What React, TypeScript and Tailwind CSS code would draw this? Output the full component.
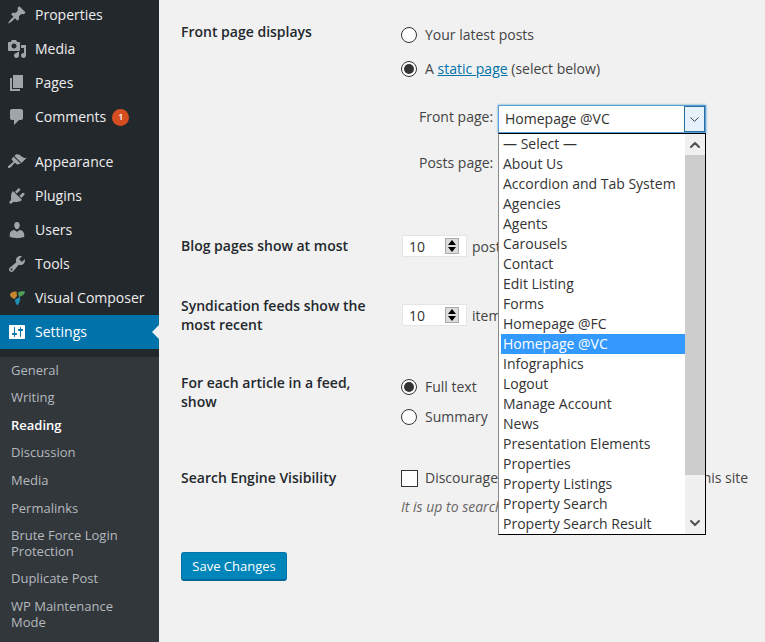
import { ChevronDown, ChevronUp } from "lucide-react";

const font = "font-['Open_Sans',sans-serif]";

const icons: Record<string, string> = {
  pin: "M10.44 3.02l1.82-1.82 6.36 6.35-1.83 1.82c-1.05-.68-2.48-.57-3.41.36l-.75.75c-.92.93-1.04 2.35-.35 3.41l-1.83 1.82-2.41-2.41-2.8 2.79c-.42.42-3.38 2.71-3.8 2.29s1.86-3.39 2.28-3.81l2.79-2.79L4.1 9.36l1.83-1.82c1.05.69 2.48.57 3.4-.36l.75-.75c.93-.92 1.05-2.35.36-3.41z",
  media: "M13 11V4c0-.55-.45-1-1-1h-1.67L9 1H5L3.67 3H2c-.55 0-1 .45-1 1v7c0 .55.45 1 1 1h10c.55 0 1-.45 1-1zM7 4.5c1.38 0 2.5 1.12 2.5 2.5S8.38 9.5 7 9.5 4.5 8.38 4.5 7 5.62 4.5 7 4.5zM14 6h5v10.5c0 1.38-1.12 2.5-2.5 2.5S14 17.88 14 16.5s1.12-2.5 2.5-2.5c.17 0 .34.02.5.05V9h-3V6zm-4 8.05V13h2v3.5c0 1.38-1.12 2.5-2.5 2.5S7 17.88 7 16.5 8.12 14 9.5 14c.17 0 .34.02.5.05z",
  pages: "M6 15V2h10v13H6zm-1 1h8v2H3V5h2v11z",
  comments: "M5 2h9c1.1 0 2 .9 2 2v7c0 1.1-.9 2-2 2h-2l-5 5v-5H5c-1.1 0-2-.9-2-2V4c0-1.1.9-2 2-2z",
  appearance: "M14.48 11.06L7.41 3.99l1.5-1.5c.5-.56 2.3-.47 3.51.32 1.21.8 1.43 1.28 2.91 2.1 1.18.64 2.45 1.26 4.45.85zm-.71.71L6.7 4.7 4.93 6.47c-.39.39-.39 1.02 0 1.41l1.06 1.06c.39.39.39 1.03 0 1.42-.6.6-1.43 1.11-2.21 1.69-.35.26-.7.53-1.01.84C1.43 13.23.4 14.9 1.2 15.7c.8.8 2.2-.18 3.55-1.53.29-.29.55-.6.8-.91.55-.72 1.09-1.48 1.69-2.08.39-.39 1.03-.39 1.42 0l1.06 1.06c.39.39 1.02.39 1.41 0z",
  plugins: "M13.11 4.36L9.87 7.6 8 5.73l3.24-3.24c.35-.34 1.05-.2 1.56.32.52.51.66 1.21.31 1.55zm-8 1.77l.91-1.12 9.01 9.01-1.19.84c-.71.71-2.63 1.16-3.82 1.16H6.14L4.9 17.26c-.59.59-1.54.59-2.12 0-.59-.58-.59-1.53 0-2.12l1.24-1.24v-3.88c0-1.13.4-3.19 1.09-3.89zm7.26 3.97l3.24-3.24c.34-.35 1.04-.21 1.55.31.52.51.66 1.21.31 1.55l-3.24 3.25z",
  users: "M10 9.25c-2.27 0-2.73-3.44-2.73-3.44C7 4.02 7.82 2 9.97 2c2.16 0 2.98 2.02 2.71 3.81 0 0-.41 3.44-2.68 3.44zm0 2.57L12.72 10c2.39 0 4.52 2.33 4.52 4.53v2.49s-3.65 1.13-7.24 1.13c-3.65 0-7.24-1.13-7.24-1.13v-2.49c0-2.25 1.94-4.48 4.47-4.48z",
  tools: "M16.68 9.77c-1.34 1.34-3.3 1.67-4.95.99l-5.41 6.52c-.99.99-2.59.99-3.58 0s-.99-2.59 0-3.57l6.52-5.42c-.68-1.65-.35-3.61.99-4.95 1.28-1.28 3.12-1.62 4.72-1.06l-2.89 2.89 2.82 2.82 2.86-2.87c.53 1.58.18 3.39-1.08 4.65zM3.81 16.21c.4.39 1.04.39 1.43 0 .4-.4.4-1.04 0-1.43-.39-.4-1.03-.4-1.43 0-.39.39-.39 1.03 0 1.43z",
  settings: "M18 16V4c0-.55-.45-1-1-1H3c-.55 0-1 .45-1 1v12c0 .55.45 1 1 1h14c.55 0 1-.45 1-1zM8 11h1c.55 0 1 .45 1 1s-.45 1-1 1H8v1.5c0 .28-.22.5-.5.5s-.5-.22-.5-.5V13H6c-.55 0-1-.45-1-1s.45-1 1-1h1V5.5c0-.28.22-.5.5-.5s.5.22.5.5V11zm5-2h-1c-.55 0-1-.45-1-1s.45-1 1-1h1V5.5c0-.28.22-.5.5-.5s.5.22.5.5V7h1c.55 0 1 .45 1 1s-.45 1-1 1h-1v5.5c0 .28-.22.5-.5.5s-.5-.22-.5-.5V9z",
};

function Dashicon({ name, className }: { name: string; className: string }) {
  return (
    <svg viewBox="0 0 20 20" className={className} fill="currentColor">
      <path d={icons[name]} />
    </svg>
  );
}

function VcLogo() {
  return (
    <svg viewBox="0 0 20 20" className="w-5 h-5">
      <path d="M3 6.5C3 4.5 7 3 9.5 3.5L10 8l-2.5 3C5 10.500 3 8.500 3 6.500z" fill="#c4872f" />
      <path d="M11 4.500C13 3 16 3 18 3.500c0 2-2 4.500-6 5.500z" fill="#4f9e5a" />
      <path d="M8 11.500L13 9c.500 2.500-.500 6-2.500 8.500C9 16 8 14 8 11.500z" fill="#1f8fb8" />
    </svg>
  );
}

function MenuItem({ icon, label, badge }: { icon: string; label: string; badge?: boolean }) {
  return (
    <div className="h-[34px] flex items-center pl-[7px] text-[14px] text-[#eeeeee]">
      {icon === "vc" ? <VcLogo /> : <Dashicon name={icon} className="w-5 h-5 text-[#a0a5aa]" />}
      <span className="ml-2 mb-[2px]">{label}</span>
      {badge && (
        <span className="ml-[6px] w-[17px] h-[17px] rounded-full bg-[#d54e21] text-white text-[9px] font-semibold flex items-center justify-center">
          1
        </span>
      )}
    </div>
  );
}

function Sidebar() {
  const sub: [string, string][] = [
    ["General", "h-[27px] mt-[8px]"],
    ["Writing", "h-[28px]"],
    ["Reading", "h-[27px]"],
    ["Discussion", "h-[28px]"],
    ["Media", "h-[28px]"],
    ["Permalinks", "h-[28px]"],
  ];
  return (
    <aside className="w-[159px] shrink-0 h-[642px] bg-[#23282d] overflow-hidden">
      <div className="-mt-[2px]">
        <MenuItem icon="pin" label="Properties" />
        <MenuItem icon="media" label="Media" />
        <MenuItem icon="pages" label="Pages" />
        <MenuItem icon="comments" label="Comments" badge />
        <div className="h-[11px]" />
        <MenuItem icon="appearance" label="Appearance" />
        <MenuItem icon="plugins" label="Plugins" />
        <MenuItem icon="users" label="Users" />
        <MenuItem icon="tools" label="Tools" />
        <MenuItem icon="vc" label="Visual Composer" />
        <div className="relative h-[34px] flex items-center pl-[7px] bg-[#0073aa] text-[14px] text-white">
          <Dashicon name="settings" className="w-5 h-5 text-white" />
          <span className="ml-2 mb-[2px]">Settings</span>
          <div className="absolute right-0 top-[10px] w-0 h-0 border-y-[7px] border-y-transparent border-r-[7px] border-r-[#f1f1f1]" />
        </div>
      </div>
      <div className="bg-[#32373c] h-[300px] pl-[11px] text-[13px] text-[#b4b9be]">
        {sub.map(([label, cls]) => (
          <div key={label} className={`flex items-center ${cls} ${label === "Reading" ? "text-white font-semibold" : ""}`}>
            {label}
          </div>
        ))}
        <div className="leading-[16px] pt-[4px] pb-[6px]">
          Brute Force Login
          <br />
          Protection
        </div>
        <div className="h-[27px] flex items-center">Duplicate Post</div>
        <div className="leading-[16px] pt-[6px]">
          WP Maintenance
          <br />
          Mode
        </div>
      </div>
    </aside>
  );
}

function Radio({ checked }: { checked?: boolean }) {
  return (
    <span className="w-[16px] h-[16px] mt-[2px] mr-[8px] rounded-full bg-white border border-[#333333] flex items-center justify-center shrink-0">
      {checked && <span className="w-[10px] h-[10px] rounded-full bg-[#333333]" />}
    </span>
  );
}

function NumberField({ suffix }: { suffix: string }) {
  return (
    <div className="flex items-center ml-px">
      <div className="w-[65px] h-[22px] bg-white border border-[#e5e5e5] flex items-center pl-[6px] text-[14px] text-[#333333]">
        <span className="w-[36px]">10</span>
        <span className="w-[14px] h-[16px] bg-[#dddddd] border border-[#aaaaaa] flex flex-col items-center justify-center gap-[2px]">
          <span className="w-0 h-0 border-x-[4px] border-x-transparent border-b-[5px] border-b-black" />
          <span className="w-0 h-0 border-x-[4px] border-x-transparent border-t-[5px] border-t-black" />
        </span>
      </div>
      <span className="ml-[5px] whitespace-nowrap">{suffix}</span>
    </div>
  );
}

const pages = [
  "— Select —",
  "About Us",
  "Accordion and Tab System",
  "Agencies",
  "Agents",
  "Carousels",
  "Contact",
  "Edit Listing",
  "Forms",
  "Homepage @FC",
  "Homepage @VC",
  "Infographics",
  "Logout",
  "Manage Account",
  "News",
  "Presentation Elements",
  "Properties",
  "Property Listings",
  "Property Search",
  "Property Search Result",
];

function PageSelect() {
  return (
    <div className="relative w-[208px] h-[28px]">
      <div className="flex h-full bg-white border border-[#5b9dd9] shadow-[0_0_2px_rgba(30,140,190,0.8)] text-[14px] text-[#333333]">
        <div className="flex-1 flex items-center pl-[6px] pb-[2px]">Homepage @VC</div>
        <div className="w-[21px] bg-[#e5f1fb] border border-[#2a6f9f] flex items-center justify-center">
          <ChevronDown size={15} strokeWidth={1.5} className="text-[#333333]" />
        </div>
      </div>
      <div className="absolute left-0 top-[28px] w-[208px] h-[402px] z-10 bg-white border border-black border-l-[#8a8a8a] flex overflow-hidden text-[14px] text-[#333333]">
        <div className="w-[186px] shrink-0 pl-[2px]">
          {pages.map((p) => (
            <div
              key={p}
              className={`h-[20px] flex items-center pl-[2px] pb-[2px] whitespace-nowrap ${p === "Homepage @VC" ? "bg-[#3399ff] text-white" : ""}`}
            >
              {p}
            </div>
          ))}
        </div>
        <div className="flex-1 bg-[#f0f0f0] flex flex-col">
          <div className="h-[21px] flex items-center justify-center">
            <ChevronUp size={16} strokeWidth={3} className="text-[#505050]" />
          </div>
          <div className="h-[320px] bg-[#cdcdcd]" />
          <div className="flex-1 flex items-end justify-center pb-[3px]">
            <ChevronDown size={16} strokeWidth={3} className="text-[#505050]" />
          </div>
        </div>
      </div>
    </div>
  );
}

function Row({ label, className, children }: { label: React.ReactNode; className: string; children: React.ReactNode }) {
  return (
    <div className={`flex ${className}`}>
      <div className="w-[220px] shrink-0 font-semibold text-[#23282d] leading-[19px]">{label}</div>
      <div className="flex-1 min-w-0">{children}</div>
    </div>
  );
}

export default function App() {
  return (
    <div className={`${font} flex w-[765px] h-[642px] overflow-hidden bg-[#f1f1f1]`}>
      <Sidebar />
      <main className="flex-1 min-w-0 pl-[22px] text-[14px] text-[#444444]">
        <Row label="Front page displays" className="pt-[22px] h-[225px]">
          <div className="flex items-center h-[20px] mt-[2px]">
            <Radio />
            Your latest posts
          </div>
          <div className="flex items-center h-[20px] mt-[14px]">
            <Radio checked />A&nbsp;<a className="text-[#0073aa] underline">static page</a>&nbsp;(select below)
          </div>
          <div className="flex items-center mt-[27px] pl-[18px] h-[28px]">
            <span className="w-[79px] pb-[5px]">Front page:</span>
            <PageSelect />
          </div>
          <div className="mt-[20px] pl-[18px] leading-[20px]">Posts page:</div>
        </Row>
        <Row label="Blog pages show at most" className="pt-[11px] h-[60px]">
          <div className="-mt-[1px]">
            <NumberField suffix="posts" />
          </div>
        </Row>
        <Row
          label={
            <>
              Syndication feeds show the
              <br />
              most recent
            </>
          }
          className="pt-[11px] h-[81px]"
        >
          <div className="pt-[8px]">
            <NumberField suffix="items" />
          </div>
        </Row>
        <Row
          label={
            <>
              For each article in a feed,
              <br />
              show
            </>
          }
          className="pt-[7px] h-[96px]"
        >
          <div className="flex items-center h-[20px] mt-[3px]">
            <Radio checked />
            Full text
          </div>
          <div className="flex items-center h-[20px] mt-[10px]">
            <Radio />
            Summary
          </div>
        </Row>
        <Row label="Search Engine Visibility" className="pt-[6px] h-[92px]">
          <div className="flex items-center h-[20px] whitespace-nowrap -mt-[1px]">
            <span className="w-[17px] h-[17px] mt-[2px] mr-[7px] bg-white border border-[#333333] shrink-0" />
            Discourage search engines from indexing this site
          </div>
          <div className="mt-[10px] text-[14px] italic text-[#666666] leading-[20px] whitespace-nowrap">
            It is up to search engines to honor this request.
          </div>
        </Row>
        <button className="block -mt-[2px] w-[106px] h-[29px] pt-px rounded-[3px] bg-[#0085ba] border border-[#0073aa] border-b-[2px] border-b-[#006799] text-[13px] text-white">
          Save Changes
        </button>
      </main>
    </div>
  );
}
